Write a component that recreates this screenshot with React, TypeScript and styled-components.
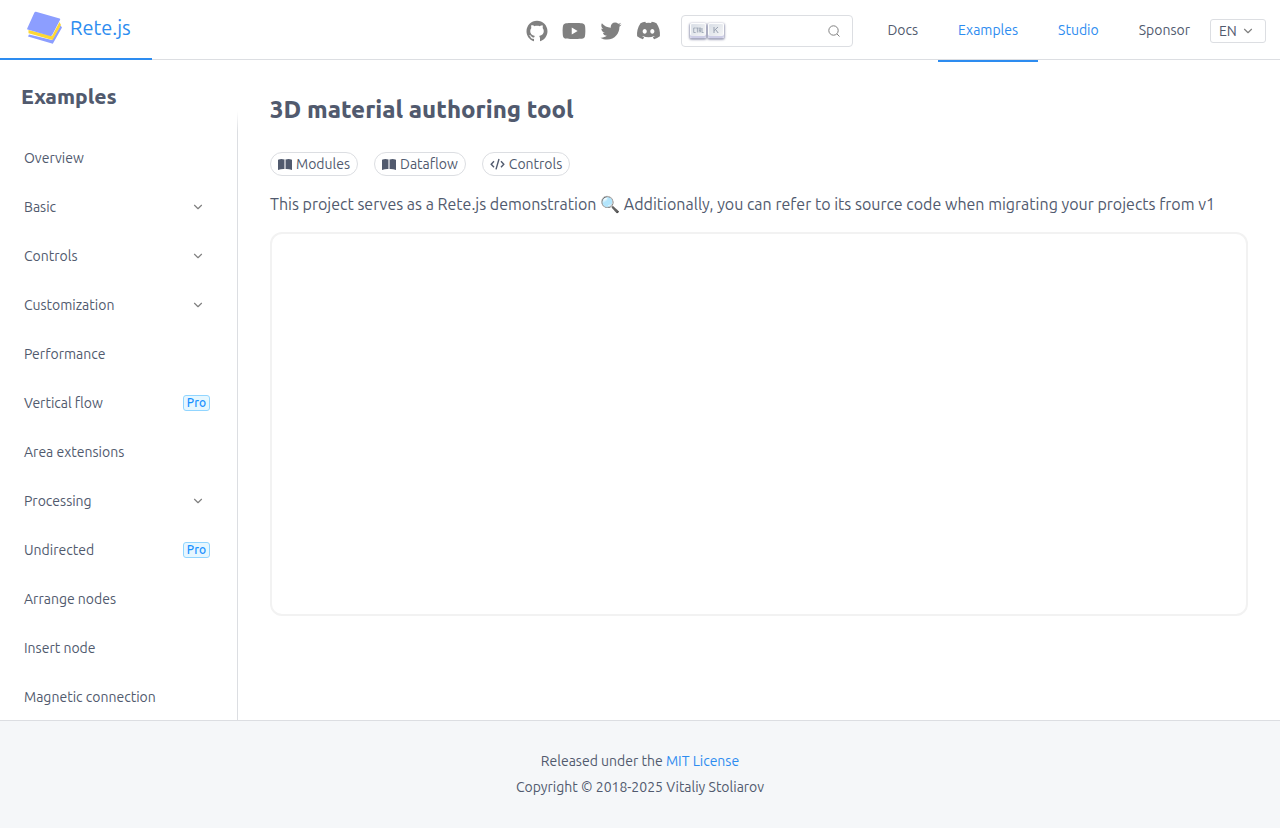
import React from 'react';
import styled, { createGlobalStyle } from 'styled-components';
import { AiFillGithub, AiFillYoutube, AiOutlineTwitter } from 'react-icons/ai';
import { FaDiscord } from 'react-icons/fa';
import { ChevronDown } from 'lucide-react';

const ink = '#515a6e';
const accent = '#2d8cf0';
const line = '#dcdee2';

const GlobalStyle = createGlobalStyle`
  *, *::before, *::after { box-sizing: border-box; }
  body {
    margin: 0;
    background: #fff;
    color: ${ink};
    font-family: Ubuntu, "Noto Sans", "Open Sans", sans-serif;
    font-size: 14px;
    line-height: 24px;
  }
  h1, h2, p, ul { margin: 0; padding: 0; }
  a { color: inherit; text-decoration: none; }
`;

const Page = styled.div`
  display: flex;
  flex-direction: column;
  min-height: 100vh;
`;

const Header = styled.header`
  display: flex;
  align-items: center;
  height: 60px;
  padding-right: 14px;
  border-bottom: 1px solid ${line};
`;

const Brand = styled.a`
  display: flex;
  align-items: center;
  gap: 8px;
  width: 152px;
  height: 60px;
  padding: 0 0 2px 26px;
  margin: 0 auto -1px 0;
  border-bottom: 2px solid ${accent};
  color: ${accent};
  font-size: 20px;
`;

const Socials = styled.div`
  display: flex;
  align-items: center;
  gap: 11px;
  margin: 2px 20px 0 0;
  color: gray;
`;

const SocialLink = styled.a`
  display: flex;
  align-items: center;
  justify-content: center;
  width: 26px;
  height: 26px;
`;

const SearchBox = styled.label`
  display: flex;
  align-items: center;
  gap: 2px;
  width: 172px;
  height: 32px;
  margin: 2px 14px 0 0;
  padding: 0 12px 0 8px;
  border: 1px solid ${line};
  border-radius: 4px;
  color: gray;
`;

const SearchInput = styled.input`
  flex: 1;
  min-width: 0;
  border: 0;
  padding: 0;
  outline: none;
  background: transparent;
  font: inherit;
`;

const Keycap = styled.kbd`
  display: flex;
  align-items: center;
  justify-content: center;
  width: 16px;
  height: 15px;
  padding-bottom: 2px;
  border-radius: 2px;
  background: linear-gradient(-225deg, #d5dbe4, #f8f8f8);
  box-shadow: inset 0 -2px 0 #cdcde6, inset 0 0 1px 1px #fff, 0 1px 2px 1px rgba(30, 35, 90, 0.4);
  color: #969faf;
`;

const Nav = styled.nav`
  display: flex;
  align-self: flex-start;
`;

const NavLink = styled.a<{ $active?: boolean; $accent?: boolean }>`
  height: 62px;
  padding: 0 20px;
  border-bottom: 2px solid ${p => (p.$active ? accent : 'transparent')};
  color: ${p => (p.$active || p.$accent ? accent : ink)};
  line-height: 60px;
`;

const Language = styled.label`
  display: grid;
  grid-template-columns: 1fr 28px;
  align-items: center;
  width: 56px;
  height: 24px;
  margin-top: 2px;
  border: 1px solid ${line};
  border-radius: 3px;
  svg { grid-area: 1 / 2; pointer-events: none; margin-left: 4px; }
`;

const LanguageSelect = styled.select`
  grid-area: 1 / 1 / 2 / 3;
  height: 22px;
  padding: 0 8px;
  border: 0;
  appearance: none;
  background: transparent;
  color: inherit;
  font: inherit;
  line-height: 22px;
`;

const Body = styled.div`
  display: flex;
  flex: 1;
  min-height: 0;
`;

const Sidebar = styled.aside`
  flex: 0 0 238px;
  height: calc(100vh - 168px);
  overflow: hidden;
  border-right: 1px solid;
  border-image: linear-gradient(transparent 52px, ${line} 72px) 1;
`;

const SidebarTitle = styled.h2`
  padding: 23px 21px 24px;
  font-size: 21px;
  font-weight: 800;
  line-height: 26px;
`;

const Menu = styled.ul`
  list-style: none;
`;

const MenuLink = styled.a`
  display: flex;
  align-items: center;
  justify-content: space-between;
  height: 49px;
  padding: 0 27px 0 24px;
`;

const MenuChevron = styled(ChevronDown)`
  margin-right: 5px;
  color: gray;
`;

const ProBadge = styled.span`
  padding: 0 3px;
  border: 1px solid #91d5ff;
  border-radius: 3px;
  background: #e6f7ff;
  color: #1890ff;
  font-size: 12px;
  font-weight: 500;
  line-height: 14px;
`;

const Main = styled.main`
  flex: 1;
  min-width: 0;
  padding: 32px;
`;

const Title = styled.h1`
  font-size: 24px;
  font-weight: 800;
  line-height: 36px;
`;

const Tags = styled.div`
  display: flex;
  gap: 16px;
  margin: 24px 0 16px;
`;

const Tag = styled.a`
  display: flex;
  align-items: center;
  gap: 4px;
  height: 24px;
  padding: 0 7px;
  border: 1px solid ${line};
  border-radius: 12px;
  line-height: 22px;
`;

const Intro = styled.p`
  font-size: 16px;
`;

const Preview = styled.section`
  height: 384px;
  margin-top: 16px;
  border: 2px solid #f2f2f2;
  border-radius: 12px;
`;

const Footer = styled.footer`
  padding: 27px 24px 28px;
  border-top: 1px solid ${line};
  background: #f5f7f9;
  text-align: center;
  line-height: 26px;
  a { color: ${accent}; }
`;

const Logo = () => (
  <svg width="36" height="34" viewBox="0 1 36 34" aria-hidden="true">
    <path d="M3 24.5 26 30 34.5 15.5 36 17.5 26.8 33.7 2 26.5Z" fill="#8c9eff" />
    <path d="M2.5 20 26 26 33.5 12 35 15 26.5 30 2.5 23.2Z" fill="#fdd835" />
    <path d="M10 1.8 33.6 8.4Q34.6 8.7 34.1 9.8L26.2 25Q25.5 26.4 24 26L1.6 19.4Q.9 19.2 1.2 18.4L8.3 2.8Q8.9 1.5 10 1.8Z" fill="#8c9eff" />
  </svg>
);

const BookIcon = () => (
  <svg width="14" height="12" viewBox="0 0 14 12" aria-hidden="true">
    <path d="M0 1.8Q3.2.6 6.3 1.5V11Q3.2 10.8 0 11.9ZM7.7 1.5Q10.8.6 14 1.8V11.9Q10.8 10.8 7.7 11Z" fill={ink} />
    <path d="M6.3 1.5H7.7V11H6.3Z" fill="#a8adb8" />
  </svg>
);

const CodeIcon = () => (
  <svg width="15" height="12" viewBox="0 0 15 12" fill="none" stroke={ink} strokeWidth="1.4" aria-hidden="true">
    <path d="M4 3.2 1.2 6.2 4 9.2M11 3.2 13.8 6.2 11 9.2M9 1 6 11.4" />
  </svg>
);

const SearchIcon = () => (
  <svg width="12" height="12" viewBox="0 0 12 12" fill="none" stroke="gray" aria-hidden="true">
    <circle cx="5.5" cy="5.5" r="4.7" />
    <path d="m9 9 2.5 2.5" />
  </svg>
);

const CtrlIcon = () => (
  <svg width="11" height="8" viewBox="0 0 11 8" fill="none" stroke="currentColor" strokeWidth="0.8" aria-hidden="true">
    <path d="M2.7 2H.7V6.5H2.7M3.2 2H5.6M4.4 2V6.5M6.2 6.5V2H7.8V4.3H6.2M7 4.3 8 6.5M9 2V6.5H10.6" />
  </svg>
);

const KIcon = () => (
  <svg width="8" height="8" viewBox="0 0 8 8" fill="none" stroke="currentColor" aria-hidden="true">
    <path d="M2 1V7M6 1 2.2 4.6M3.6 3.6 6.2 7" />
  </svg>
);

type Item = { label: string; group?: boolean; pro?: boolean };

const items: Item[] = [
  { label: 'Overview' },
  { label: 'Basic', group: true },
  { label: 'Controls', group: true },
  { label: 'Customization', group: true },
  { label: 'Performance' },
  { label: 'Vertical flow', pro: true },
  { label: 'Area extensions' },
  { label: 'Processing', group: true },
  { label: 'Undirected', pro: true },
  { label: 'Arrange nodes' },
  { label: 'Insert node' },
  { label: 'Magnetic connection' },
];

export default function App() {
  return (
    <Page>
      <GlobalStyle />
      <Header>
        <Brand href="#"><Logo />Rete.js</Brand>
        <Socials>
          <SocialLink href="#" aria-label="GitHub"><AiFillGithub size={24} /></SocialLink>
          <SocialLink href="#" aria-label="YouTube"><AiFillYoutube size={26} /></SocialLink>
          <SocialLink href="#" aria-label="Twitter"><AiOutlineTwitter size={26} /></SocialLink>
          <SocialLink href="#" aria-label="Discord"><FaDiscord size={25} /></SocialLink>
        </Socials>
        <SearchBox>
          <Keycap><CtrlIcon /></Keycap>
          <Keycap><KIcon /></Keycap>
          <SearchInput type="text" aria-label="Search" />
          <SearchIcon />
        </SearchBox>
        <Nav>
          <NavLink href="#">Docs</NavLink>
          <NavLink href="#" $active>Examples</NavLink>
          <NavLink href="#" $accent>Studio</NavLink>
          <NavLink href="#">Sponsor</NavLink>
        </Nav>
        <Language>
          <LanguageSelect aria-label="Language" defaultValue="EN">
            <option>EN</option>
          </LanguageSelect>
          <ChevronDown size={14} color="gray" />
        </Language>
      </Header>
      <Body>
        <Sidebar>
          <SidebarTitle>Examples</SidebarTitle>
          <Menu>
            {items.map(({ label, group, pro }) => (
              <li key={label}>
                <MenuLink href="#">
                  {label}
                  {group && <MenuChevron size={14} />}
                  {pro && <ProBadge>Pro</ProBadge>}
                </MenuLink>
              </li>
            ))}
          </Menu>
        </Sidebar>
        <Main>
          <Title>3D material authoring tool</Title>
          <Tags>
            <Tag href="#"><BookIcon />Modules</Tag>
            <Tag href="#"><BookIcon />Dataflow</Tag>
            <Tag href="#"><CodeIcon />Controls</Tag>
          </Tags>
          <Intro>
            This project serves as a Rete.js demonstration 🔍 Additionally, you can refer to its source code when migrating your projects from v1
          </Intro>
          <Preview aria-label="Example preview" />
        </Main>
      </Body>
      <Footer>
        <p>Released under the <a href="#">MIT License</a></p>
        <p>Copyright © 2018-2025 Vitaliy Stoliarov</p>
      </Footer>
    </Page>
  );
}
